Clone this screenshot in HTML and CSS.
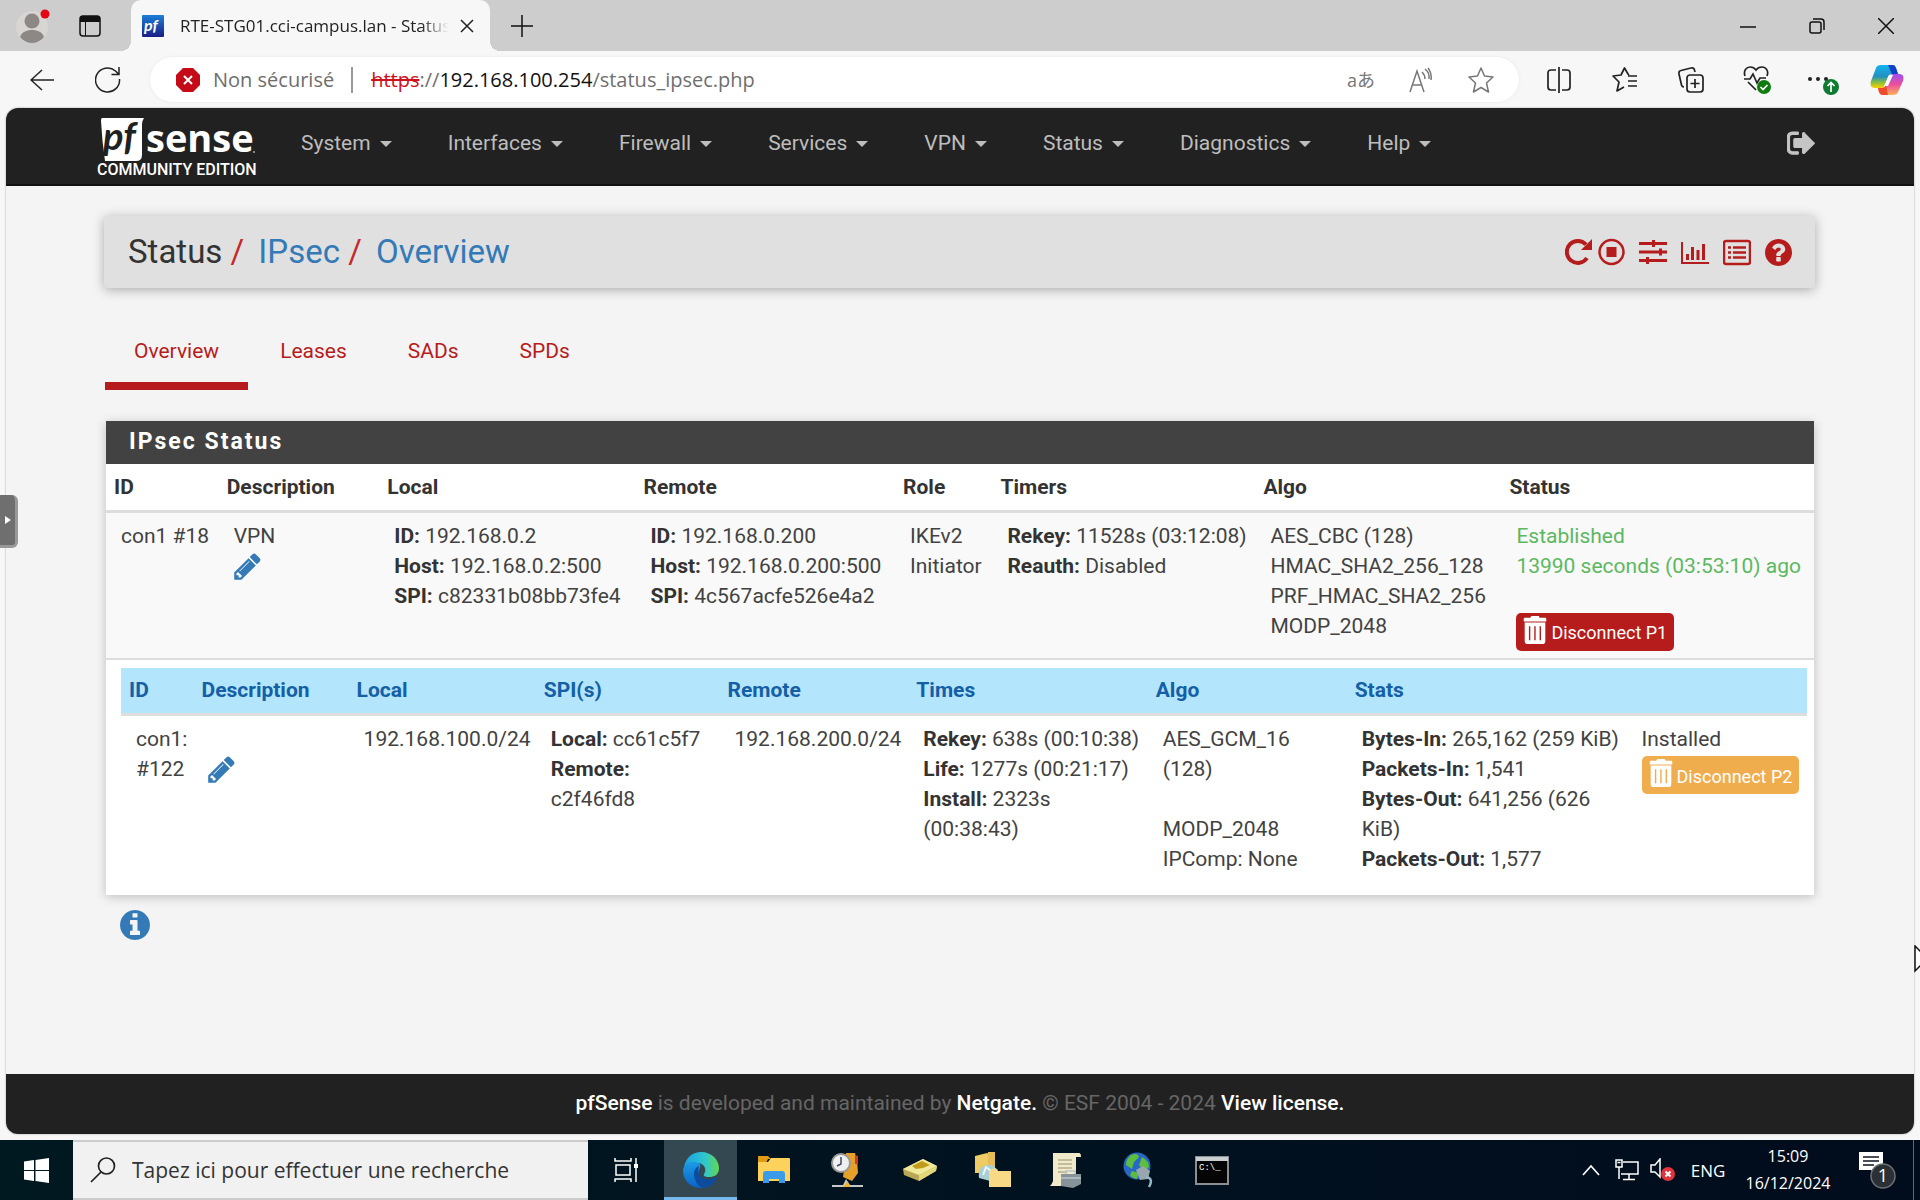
FILE: index.html
```html
<!DOCTYPE html>
<html lang="fr">
<head>
<meta charset="utf-8">
<title>RTE-STG01.cci-campus.lan - Status: IPsec: Overview</title>
<link rel="stylesheet" href="styles.css">
</head>
<body>
<svg class="defs" aria-hidden="true">
  <symbol id="pencil" viewBox="128 0 1536 1792"><path d="M491 1536l91-91-235-235-91 91v107h128v128h107zm523-928q0-22-22-22-10 0-17 7l-542 542q-7 7-7 17 0 22 22 22 10 0 17-7l542-542q7-7 7-17zm-54-192l416 416-832 832h-416v-416zm683 96q0 53-37 90l-166 166-416-416 166-165q36-38 90-38 53 0 91 38l235 234q37 39 37 91z"/></symbol>
  <symbol id="trash" viewBox="0 0 24 32"><path fill-rule="evenodd" d="M8 1h8l1 2h6q1 0 1 1v3H0V4q0-1 1-1h6zM1 8h22v20q0 3-3 3H4q-3 0-3-3zM5.500 12v15h1.500V12zm5.700 0v15h1.500V12zm5.700 0v15h1.500V12z"/></symbol>
</svg>

<header class="browser">
  <div class="titlebar">
    <button class="profile" aria-label="Profil"><svg width="36" height="36" viewBox="0 0 36 36"><circle cx="17" cy="19" r="16" fill="#d8d6d3"/><circle cx="17" cy="13" r="7.500" fill="#8d8885"/><path d="M5 29c2-5 6-7 12-7s10 2 12 7c-7 8-17 8-24 0z" fill="#8d8885"/><circle cx="30" cy="6" r="4.500" fill="#e30613"/></svg></button>
    <button class="workspaces" aria-label="Onglets"><svg width="22" height="22" viewBox="0 0 22 22"><rect x="1" y="1" width="20" height="20" rx="3" fill="none" stroke="#111" stroke-width="1.500"/><path d="M1 7V4q0-3 3-3h14q3 0 3 3v3zM6 7v14h1V7z" fill="#111"/></svg></button>
    <div class="tab">
      <svg width="22" height="22" viewBox="0 0 22 22" class="favicon"><defs><linearGradient id="fav" x2="0" y2="1"><stop stop-color="#1d7fd6"/><stop offset="1" stop-color="#1b1c86"/></linearGradient></defs><rect width="22" height="22" rx="1" fill="url(#fav)"/><text x="2" y="16" class="pf-mini">pf</text></svg>
      <span class="tab-title">RTE-STG01.cci-campus.lan - Status</span>
      <button class="tab-close" aria-label="Fermer l'onglet"><svg width="14" height="14" viewBox="0 0 14 14"><path d="M1 1l12 12M13 1L1 13" stroke="#222" stroke-width="1.500"/></svg></button>
    </div>
    <button class="new-tab" aria-label="Nouvel onglet"><svg width="22" height="22" viewBox="0 0 22 22"><path d="M11 0v22M0 11h22" stroke="#111" stroke-width="1.500"/></svg></button>
    <div class="window-controls">
      <button aria-label="Réduire"><svg width="16" height="16" viewBox="0 0 16 16"><path d="M0 9h16" stroke="#111" stroke-width="1.500"/></svg></button>
      <button aria-label="Restaurer"><svg width="16" height="16" viewBox="0 0 16 16" fill="none" stroke="#111" stroke-width="1.500"><rect x="1" y="4" width="11" height="11" rx="2"/><path d="M4 1h8q3 0 3 3v8"/></svg></button>
      <button aria-label="Fermer"><svg width="16" height="16" viewBox="0 0 16 16"><path d="M0 0l16 16M16 0L0 16" stroke="#111" stroke-width="1.500"/></svg></button>
    </div>
  </div>
  <div class="toolbar">
    <button class="tool" aria-label="Retour"><svg width="24" height="22" viewBox="0 0 24 22" fill="none" stroke="#222" stroke-width="1.500"><path d="M24 11H1M12 1L1 11l11 10"/></svg></button>
    <button class="tool" aria-label="Actualiser"><svg width="26" height="26" viewBox="0 0 26 26" fill="none" stroke="#222" stroke-width="1.500"><path d="M24.500 12a12 12 0 1 1-4-8l3 3M24 0v7.500h-7.500"/></svg></button>
    <div class="address">
      <svg width="24" height="24" viewBox="0 0 24 24"><path d="M7 0h10l7 7v10l-7 7H7l-7-7V7z" fill="#c50b17"/><path d="M8 8l8 8M16 8l-8 8" stroke="#fff" stroke-width="2"/></svg>
      <span class="insecure">Non sécurisé</span>
      <div class="url" role="textbox" contenteditable="true" spellcheck="false" aria-label="Adresse"><s>https</s>://<b>192.168.100.254</b>/status_ipsec.php</div>
      <button class="tool small translate" aria-label="Traduire">aあ</button>
      <button class="tool small" aria-label="Lecture à voix haute"><svg width="26" height="26" viewBox="0 0 26 26" fill="none" stroke="#777" stroke-width="1.500"><path d="M2 25L9 4l7 21M4 18h10M14 5q3 3 3 7M17 2q5 4 4 10M20 1q4 5 3 12"/></svg></button>
      <button class="tool small" aria-label="Favori"><svg width="26" height="26" viewBox="0 0 26 26" fill="none" stroke="#777" stroke-width="1.500" stroke-linejoin="round"><path d="M13 1l3.500 8 8.500 1-6.500 6 2 9L13 20.500 5.500 25l2-9L1 10l8.500-1z"/></svg></button>
    </div>
    <button class="tool" aria-label="Écran partagé"><svg width="24" height="26" viewBox="0 0 24 26" fill="none" stroke="#222" stroke-width="1.700"><path d="M9 3H4Q1 3 1 6v14q0 3 3 3h5M15 3h5q3 0 3 3v14q0 3-3 3h-5M12 0v26"/></svg></button>
    <button class="tool" aria-label="Favoris"><svg width="26" height="26" viewBox="0 0 26 26" fill="none" stroke="#222" stroke-width="1.700" stroke-linejoin="round"><path d="M17 8l-1-1-3.500-6L9 8l-8 1 6 6-2 9 7-4M16 9h9M16 14h9M16 19h9"/></svg></button>
    <button class="tool" aria-label="Collections"><svg width="26" height="26" viewBox="0 0 26 26" fill="none" stroke="#222" stroke-width="1.700"><rect x="9" y="8" width="16" height="17" rx="3"/><path d="M17 12v9M12.500 16.500h9M6 20q-2 0-2.500-2L1 7q-.500-3 2-3.500L13 1q3-.500 3.500 2l.500 2"/></svg></button>
    <button class="tool" aria-label="Performances"><svg width="28" height="28" viewBox="0 0 28 28" fill="none" stroke="#222" stroke-width="1.700"><path d="M2 10C0 4 4 1 7 1q4 0 6 3 2-3 6-3c4 0 7 4 5 9M1 13h6l3-5 4 9 3-5h6M5 16l8 8"/><circle cx="21" cy="21" r="7" fill="#107c10" stroke="none"/><path d="M17.500 21l2.500 2.500 4.500-4.500" stroke="#fff"/></svg></button>
    <button class="tool" aria-label="Paramètres"><svg width="34" height="30" viewBox="0 0 34 30"><circle cx="4" cy="14" r="2" fill="#222"/><circle cx="12" cy="14" r="2" fill="#222"/><circle cx="20" cy="14" r="2" fill="#222"/><circle cx="25" cy="22" r="8" fill="#0f7b32"/><path d="M25 27V18M21.500 21l3.500-3.500 3.500 3.500" fill="none" stroke="#fff" stroke-width="1.700"/></svg></button>
    <button class="tool copilot" aria-label="Copilot"><svg width="34" height="32" viewBox="0 0 34 32"><defs><linearGradient id="c1" x2="0" y2="1"><stop stop-color="#12b4f0"/><stop offset=".5" stop-color="#2390c0"/><stop offset=".75" stop-color="#87be3f"/><stop offset="1" stop-color="#ffd000"/></linearGradient><linearGradient id="c2" x2="0" y2="1"><stop stop-color="#9b4ff0"/><stop offset=".5" stop-color="#ec4f9c"/><stop offset="1" stop-color="#ffb15a"/></linearGradient></defs><path d="M11 1h12q2 0 3 3l2 6h-6q-3 0-4 3l-3 8q-1 3-4 3H5q-6 0-4-7L6 4q1-3 5-3z" fill="url(#c1)"/><path d="M18 1h5q2 0 3 3l2 6h-6z" fill="#1440c8"/><path d="M23 31H12q-2 0-3-3l-1-4h4q3 0 4-3l3-8q1-3 4-3h6q6 0 4 7l-5 11q-1 3-5 3z" fill="url(#c2)"/><path d="M8 24h4q3 0 4-3l2 10h-6q-2 0-3-3z" fill="#ee4b2b"/><path d="M19 11h4l-5 11h-4z" fill="#fff"/></svg></button>
  </div>
</header>

<div class="viewport">
  <nav class="navbar">
    <a class="brand" href="#" aria-label="pfSense Community Edition"><svg width="164" height="64" viewBox="0 0 164 64"><path d="M5 2h42q-2 3-2 6v31q0 6-6 6H8q-3-20-4-40q0-3 1-3z" fill="#fff"/><text x="6" y="34" class="brand-pf">pf</text><text x="49" y="36" class="brand-sense">sense</text><circle cx="157" cy="36" r="1" fill="#aaa"/><text x="0" y="59" class="brand-edition">COMMUNITY EDITION</text></svg></a>
    <ul class="menu">
      <li><a href="#">System</a></li>
      <li><a href="#">Interfaces</a></li>
      <li><a href="#">Firewall</a></li>
      <li><a href="#">Services</a></li>
      <li><a href="#">VPN</a></li>
      <li><a href="#">Status</a></li>
      <li><a href="#">Diagnostics</a></li>
      <li><a href="#">Help</a></li>
    </ul>
    <a class="logout" href="#" aria-label="Logout"><svg width="28" height="24" viewBox="64 192 1600 1400"><path stroke-width="70" d="M704 1440q0 4 1 20t.5 26.500-3 23.500-10 19.500-20.500 6.500h-320q-119 0-203.500-84.500t-84.500-203.500v-704q0-119 84.500-203.500t203.500-84.500h320q13 0 22.500 9.500t9.500 22.500q0 4 1 20t.5 26.500-3 23.500-10 19.500-20.500 6.500h-320q-66 0-113 47t-47 113v704q0 66 47 113t113 47h312l11.500 1 11.500 3 8 5.500 7 9 2 13.500zm928-544q0 26-19 45l-544 544q-19 19-45 19t-45-19-19-45v-288h-448q-26 0-45-19t-19-45v-384q0-26 19-45t45-19h448v-288q0-26 19-45t45-19 45 19 19 45l544 544q19 19 19 45z"/></svg></a>
  </nav>

  <main class="content">
    <div class="page-header">
      <h1>Status <i>/</i> <a href="#">IPsec</a> <i>/</i> <a href="#">Overview</a></h1>
      <div class="shortcuts">
        <a href="#" aria-label="Restart service" class="tight"><svg width="28" height="28" viewBox="0 0 28 28"><path d="M22 20A11 11 0 1 1 21 6.500" fill="none" stroke="#b71c1c" stroke-width="4"/><path d="M27 1v11H16z" fill="#b71c1c"/></svg></a>
        <a href="#" aria-label="Stop service"><svg width="27" height="28" viewBox="0 0 27 28"><circle cx="13.500" cy="14" r="12" fill="none" stroke="#b71c1c" stroke-width="2.500"/><rect x="8.500" y="9" width="10" height="10" fill="#b71c1c"/></svg></a>
        <a href="#" aria-label="Settings"><svg width="28" height="28" viewBox="0 0 28 28" fill="#b71c1c"><path d="M0 4h28v3H0zM0 12.500h28v3H0zM0 21h28v3H0zM13 2h3v7h-3zM20 10.500h3v7h-3zM7 19h3v7H7z"/></svg></a>
        <a href="#" aria-label="Status"><svg width="28" height="28" viewBox="0 0 28 28" fill="#b71c1c"><path d="M0 4h2v20h26v2H0zM5 16h3v6H5zM10 9h3v13h-3zM15.500 12h3v10h-3zM21 6h3v16h-3z"/></svg></a>
        <a href="#" aria-label="Logs"><svg width="28" height="28" viewBox="0 0 28 28"><rect x="1" y="3" width="26" height="23" rx="2" fill="none" stroke="#b71c1c" stroke-width="2.500"/><path d="M5 9.500h3M10 9.500h13M5 14.500h3M10 14.500h13M5 19.500h3M10 19.500h13" stroke="#b71c1c" stroke-width="2.500"/></svg></a>
        <a href="#" aria-label="Help"><svg width="27" height="27" viewBox="128 128 1536 1536" fill="#b71c1c"><path d="M1024 1376v-192q0-14-9-23t-23-9h-192q-14 0-23 9t-9 23v192q0 14 9 23t23 9h192q14 0 23-9t9-23zm256-672q0-88-55.500-163t-138.500-116-170-41q-243 0-371 213-15 24 8 42l132 100q7 6 19 6 16 0 25-12 53-68 86-92 34-24 86-24 48 0 85.500 26t37.500 59q0 38-20 61t-68 45q-63 28-115.500 86.500t-52.500 125.500v36q0 14 9 23t23 9h192q14 0 23-9t9-23q0-19 21.500-49.500t54.500-49.500q32-18 49-28.500t46-35 44.500-48 28-60.500 12.500-81zm384 192q0 209-103 385.500t-279.500 279.500-385.500 103-385.500-103-279.500-279.500-103-385.500 103-385.500 279.500-279.500 385.500-103 385.500 103 279.500 279.500 103 385.500z"/></svg></a>
      </div>
    </div>

    <ul class="tabs">
      <li class="active"><a href="#">Overview</a></li>
      <li><a href="#">Leases</a></li>
      <li><a href="#">SADs</a></li>
      <li><a href="#">SPDs</a></li>
    </ul>

    <section class="panel">
      <h2>IPsec Status</h2>
      <table class="phase1">
        <colgroup><col class="w-id"><col class="w-desc"><col class="w-local"><col class="w-remote"><col class="w-role"><col class="w-timers"><col class="w-algo"><col></colgroup>
        <thead><tr><th>ID</th><th>Description</th><th>Local</th><th>Remote</th><th>Role</th><th>Timers</th><th>Algo</th><th>Status</th></tr></thead>
        <tbody>
          <tr class="connection">
            <td>con1 #18</td>
            <td>VPN<br><a href="#" aria-label="Edit"><svg class="pencil" width="27" height="31"><use href="#pencil"/></svg></a></td>
            <td><b>ID:</b> 192.168.0.2<br><b>Host:</b> 192.168.0.2:500<br><b>SPI:</b> c82331b08bb73fe4</td>
            <td><b>ID:</b> 192.168.0.200<br><b>Host:</b> 192.168.0.200:500<br><b>SPI:</b> 4c567acfe526e4a2</td>
            <td>IKEv2<br>Initiator</td>
            <td><b>Rekey:</b> 11528s (03:12:08)<br><b>Reauth:</b> Disabled</td>
            <td>AES_CBC (128)<br>HMAC_SHA2_256_128<br>PRF_HMAC_SHA2_256<br>MODP_2048</td>
            <td class="ok">Established<br>13990 seconds (03:53:10) ago<br><br><button class="btn danger"><svg width="24" height="30"><use href="#trash"/></svg><span>Disconnect P1</span></button></td>
          </tr>
          <tr>
            <td colspan="8" class="children">
              <table class="phase2">
                <colgroup><col class="c-id"><col class="c-desc"><col class="c-local"><col class="c-spi"><col class="c-remote"><col class="c-times"><col class="c-algo"><col class="c-stats"><col></colgroup>
                <thead><tr><th>ID</th><th>Description</th><th>Local</th><th>SPI(s)</th><th>Remote</th><th>Times</th><th>Algo</th><th>Stats</th><th></th></tr></thead>
                <tbody><tr>
                  <td>con1:<br>#122</td>
                  <td><br><a href="#" aria-label="Edit"><svg class="pencil" width="27" height="31"><use href="#pencil"/></svg></a></td>
                  <td>192.168.100.0/24</td>
                  <td><b>Local:</b> cc61c5f7<br><b>Remote:</b><br>c2f46fd8</td>
                  <td>192.168.200.0/24</td>
                  <td><b>Rekey:</b> 638s (00:10:38)<br><b>Life:</b> 1277s (00:21:17)<br><b>Install:</b> 2323s<br>(00:38:43)</td>
                  <td>AES_GCM_16<br>(128)<br><br>MODP_2048<br>IPComp: None</td>
                  <td><b>Bytes-In:</b> 265,162 (259 KiB)<br><b>Packets-In:</b> 1,541<br><b>Bytes-Out:</b> 641,256 (626<br>KiB)<br><b>Packets-Out:</b> 1,577</td>
                  <td>Installed<br><button class="btn warning"><svg width="24" height="30"><use href="#trash"/></svg><span>Disconnect P2</span></button></td>
                </tr></tbody>
              </table>
            </td>
          </tr>
        </tbody>
      </table>
    </section>
    <button class="info" aria-label="Information"><svg width="30" height="30" viewBox="128 128 1536 1536" fill="#337ab7"><path d="M1152 1376v-160q0-14-9-23t-23-9h-96v-512q0-14-9-23t-23-9h-320q-14 0-23 9t-9 23v160q0 14 9 23t23 9h96v320h-96q-14 0-23 9t-9 23v160q0 14 9 23t23 9h448q14 0 23-9t9-23zm-128-896v-160q0-14-9-23t-23-9h-192q-14 0-23 9t-9 23v160q0 14 9 23t23 9h192q14 0 23-9t9-23zm640 416q0 209-103 385.500t-279.500 279.500-385.500 103-385.500-103-279.500-279.500-103-385.500 103-385.500 279.500-279.500 385.500-103 385.500 103 279.500 279.500 103 385.500z"/></svg></button>
  </main>

  <footer class="footer"><p><a href="#">pfSense</a> is developed and maintained by <a href="#">Netgate.</a> © ESF 2004 - 2024 <a href="#">View license.</a></p></footer>
</div>

<div class="taskbar">
  <button class="start" aria-label="Démarrer"><svg width="25" height="25" viewBox="0 0 25 25" fill="#fff"><path d="M0 3.500l10-1.400V12H0zM11.500 1.900L25 0v12H11.500zM0 13h10v9.900L0 21.500zM11.500 13H25v12l-13.500-1.900z"/></svg></button>
  <label class="search"><svg width="26" height="26" viewBox="0 0 26 26" fill="none" stroke="#222" stroke-width="1.700"><circle cx="16.500" cy="9" r="8"/><path d="M11 15L1 25"/></svg><input type="text" placeholder="Tapez ici pour effectuer une recherche" aria-label="Recherche"></label>
  <button class="taskview" aria-label="Vue des tâches"><svg width="25" height="24" viewBox="0 0 25 24" fill="none" stroke="#fff" stroke-width="1.500"><rect x="2" y="7" width="14" height="10"/><path d="M1 0v3h16V0M1 24v-3h16v3M22 0v24"/><path d="M20 6h4v4h-4z" fill="#fff" stroke="none"/></svg></button>
  <button class="app active" aria-label="Microsoft Edge"><svg width="36" height="36" viewBox="0 0 36 36"><defs><linearGradient id="e1" x2="1"><stop stop-color="#1ba0e0"/><stop offset=".6" stop-color="#2fc6cf"/><stop offset="1" stop-color="#62d84e"/></linearGradient><linearGradient id="e2" x2="0" y2="1"><stop stop-color="#1c9be8"/><stop offset="1" stop-color="#0b62c4"/></linearGradient></defs><path d="M1 15C3 5 10 0 18 0c11 0 18 8 18 16 0 7-5 9-10 9-4 0-6-1-5-3 3-4 1-11-7-11C8 11 3 13 1 15z" fill="url(#e1)"/><path d="M0 18c1-6 7-9 13-8 4 1 5 3 4 6-3 6-1 14 7 15 3 0 6 0 9-3-4 6-10 8-15 8C8 36 0 29 0 18z" fill="url(#e2)"/><path d="M11 22c0-4 2-7 5-8-2 5 0 12 7 13 4 1 8-1 10-2 1 0 1 1 0 3-4 6-9 8-13 8-5-1-9-8-9-14z" fill="#0d4c9c"/></svg></button>
  <button class="app" aria-label="Explorateur de fichiers"><svg width="34" height="30" viewBox="0 0 34 30"><path d="M1 1h10l3 3h-3l-2 4H1z" fill="#e29a12"/><path d="M1 7h10l3-4h18q1 0 1 1v22H1z" fill="#ffd35b"/><path d="M6 28V19q0-3 3-3h16q3 0 3 3v9h-6v-4H12v4z" fill="#3c9be8"/></svg></button>
  <button class="app" aria-label="Planificateur"><svg width="34" height="36" viewBox="0 0 34 36"><path d="M16 1h9q3 10 3 20l-6 8-9-4z" fill="#e5a02c"/><path d="M25 3l3 1v8h-3z" fill="#d4362a"/><circle cx="11" cy="11" r="9" fill="#eef0f0" stroke="#999" stroke-width="2"/><path d="M11 5v7l-4 2" fill="none" stroke="#446" stroke-width="1.500"/><path d="M2 33h11l3-6 4 6h13v2H2z" fill="#c3c9c9"/><path d="M14 35q3-9 6 0z" fill="#f3b21a"/></svg></button>
  <button class="app" aria-label="Stockage"><svg width="34" height="24" viewBox="0 0 34 24"><path d="M0 11L20 1l14 7-1 5-17 10L1 17z" fill="#b9a956"/><path d="M0 11L20 1l14 7-18 9z" fill="#f1ea9b"/><path d="M9 8l10-5 8 4-7 3-7 1z" fill="#c39b1c"/><path d="M16 17l18-9-1 5-17 10z" fill="#e3d77c"/></svg></button>
  <button class="app" aria-label="Serveur de fichiers"><svg width="38" height="36" viewBox="0 0 38 36"><path d="M1 4l12-3 8 5v15H1z" fill="#efcb66"/><path d="M14 0h7v14h-7z" fill="#e5bd58"/><path d="M5 26q-2-14 13-13l6 5-4 12z" fill="#a9cfd4"/><path d="M9 23l3-8 9 7" fill="none" stroke="#eaf7f8" stroke-width="2"/><path d="M15 19l5-3 4 3h13v16H15z" fill="#f8da86"/></svg></button>
  <button class="app" aria-label="Stratégies"><svg width="34" height="36" viewBox="0 0 34 36"><path d="M4 1h26q2 0 2 4h-5v24q0 5-4 5H1q2-2 3-5z" fill="#f0eacb"/><path d="M9 8h14M9 12h14M9 16h14M9 20h9" stroke="#b4ae90" stroke-width="1.500"/><path d="M12 22h20v10l-8 4-12-2z" fill="#87939a"/><path d="M17 22v-3h9v3M12 26h20" fill="none" stroke="#bac4c8" stroke-width="1.500"/></svg></button>
  <button class="app" aria-label="Réseau"><svg width="34" height="36" viewBox="0 0 34 36"><circle cx="15" cy="14" r="13.500" fill="#2767c8"/><path d="M9 3q7-3 8 2l-5 5-2 7-6-4q0-6 5-10zM20 5q7 4 7 10l-5 5-5-7zM10 19l7 2-2 6q-5-1-7-4z" fill="#5dbd3c"/><path d="M14 18l7-4 7 5-2 8-8 1z" fill="#98a6ad"/><path d="M24 25q8 1 3 10" fill="none" stroke="#93b4c2" stroke-width="2.500"/></svg></button>
  <button class="app" aria-label="Invite de commandes"><svg width="34" height="29" viewBox="0 0 34 29"><rect x="1" y="1" width="32" height="27" fill="#050505" stroke="#8b8f92" stroke-width="2"/><path d="M1 1h32v4H1z" fill="#c9ced0"/><text x="4" y="14" class="cmd">C:\_</text></svg></button>
  <div class="tray">
    <button class="tray-icon" aria-label="Icônes masquées"><svg width="18" height="12" viewBox="0 0 18 12"><path d="M1 11l8-9 8 9" fill="none" stroke="#fff" stroke-width="1.700"/></svg></button>
    <button class="tray-icon" aria-label="Réseau"><svg width="24" height="22" viewBox="0 0 24 22" fill="none" stroke="#fff" stroke-width="1.500"><path d="M8 3h15v12H6M14 15v6M8 20.500h12M1 1h6v7H1zM4 8v12M2.500 3.500h3"/></svg></button>
    <button class="tray-icon" aria-label="Volume"><svg width="26" height="24" viewBox="0 0 26 24"><path d="M1 7h4l5-6v18l-5-5H1z" fill="none" stroke="#fff" stroke-width="1.500"/><circle cx="18" cy="16" r="7" fill="#e0333c"/><path d="M15.500 13.500l5 5M20.500 13.500l-5 5" stroke="#fff" stroke-width="2"/></svg></button>
    <button class="lang">ENG</button>
    <button class="clock"><span>15:09</span><span>16/12/2024</span></button>
    <button class="notif" aria-label="Notifications"><svg width="38" height="38" viewBox="0 0 38 38"><path d="M1 1h24v18H19v6l-6-6H1z" fill="#fff"/><path d="M5 6h16M5 10h16M5 14h11" stroke="#0a1620" stroke-width="1.700"/><circle cx="25" cy="25" r="12" fill="#2b3036" stroke="#6c7074" stroke-width="1.500"/><text x="25" y="31" text-anchor="middle" class="count">1</text></svg></button>
  </div>
</div>

<button class="side-handle" aria-label="Ouvrir le panneau"><svg width="6" height="8" viewBox="0 0 6 8"><path d="M0 0l6 4-6 4z" fill="#fff"/></svg></button>
<svg class="pointer" width="6" height="28" viewBox="0 0 6 28" aria-hidden="true"><path d="M1 1v25l7-7V8z" fill="#fff" stroke="#111" stroke-width="1.500"/></svg>
</body>
</html>
```
FILE: styles.css
```css
* { box-sizing: border-box; }
body {
  margin: 0;
  min-height: 100vh;
  display: flex;
  flex-direction: column;
  position: relative;
  overflow-x: hidden;
  background: #f7f7f7;
  color: #424242;
  font: 21px/30px Roboto, sans-serif;
}
.defs { position: absolute; width: 0; height: 0; }
button { border: 0; padding: 0; background: none; font: inherit; color: inherit; display: inline-flex; align-items: center; justify-content: center; }
svg { display: block; flex: none; }
a { text-decoration: none; }
ul { list-style: none; margin: 0; padding: 0; display: flex; }

/* browser chrome */
.browser, .taskbar { font-family: "Open Sans", "Noto Sans CJK JP", sans-serif; }
.titlebar { display: flex; height: 51px; background: #cdcdcd; }
.profile { width: 66px; }
.workspaces { width: 48px; }
.tab { display: flex; align-items: center; width: 359px; margin-left: 17px; padding: 0 12px 0 11px; background: #f7f7f7; border-radius: 10px 10px 0 0; position: relative; }
.tab::before, .tab::after { content: ""; position: absolute; bottom: 0; width: 10px; height: 10px; }
.tab::before { left: -10px; background: radial-gradient(circle at 0 0, #cdcdcd 10px, #f7f7f7 10px); }
.tab::after { right: -10px; background: radial-gradient(circle at 100% 0, #cdcdcd 10px, #f7f7f7 10px); }
.tab-title { flex: 1; min-width: 0; margin-left: 16px; overflow: hidden; white-space: nowrap; font-size: 17px; color: #222; mask-image: linear-gradient(90deg, #000 88%, transparent 98%); }
.tab-close { width: 22px; margin-left: 2px; }
.pf-mini { font: italic bold 16px Lato, sans-serif; fill: #fff; }
.new-tab { width: 64px; }
.window-controls { display: flex; margin-left: auto; }
.window-controls button { width: 69px; }
.toolbar { display: flex; align-items: center; height: 57px; padding: 0 2px 0 9px; }
.tool { width: 66px; height: 44px; }
.tool.small { width: 60px; }
.tool.copilot { width: 62px; }
.address { flex: 1; display: flex; align-items: center; height: 45px; margin: 0 7px 0 9px; padding: 0 8px 0 26px; border-radius: 23px; background: #fff; box-shadow: 0 0 3px #e4e4e4; }
.insecure { margin-left: 13px; padding-right: 17px; border-right: 2px solid #999; color: #6d6d6d; font-size: 20px; line-height: 26px; }
.url { flex: 1; margin-left: 18px; font-size: 20px; color: #6f6f6f; white-space: nowrap; }
.url s { color: #d0121b; }
.url b { font-weight: normal; color: #111; }
.translate { color: #777; font-size: 18px; }

/* page */
.viewport { flex: 1; display: flex; flex-direction: column; margin: 0 6px 6px; border-radius: 12px; overflow: hidden; background: #f4f4f4; box-shadow: 0 0 2px #999; }
.navbar { display: flex; height: 78px; padding: 0 99px 0 91px; background: #212121; border-bottom: 2px solid #111; }
.brand { width: 164px; margin: 8px 12px 0 0; }
.brand-pf { font: italic bold 38px Lato, sans-serif; fill: #212121; }
.brand-sense { font: bold 38px "Open Sans", sans-serif; fill: #fff; }
.brand-edition { font: 500 16px Roboto, sans-serif; fill: #fff; }
.menu a { display: block; padding: 20px 28px; color: #bdbdbd; }
.menu a::after { content: ""; display: inline-block; margin-left: 9px; vertical-align: middle; border: 6px solid transparent; border-top-color: #bdbdbd; border-bottom: 0; }
.logout { margin: 23px 0 0 auto; fill: #c4c4c4; stroke: #c4c4c4; }
.content { flex: 1; padding: 30px 99px 24px 98px; }
.page-header { display: flex; align-items: center; justify-content: space-between; height: 72px; padding: 0 23px 0 24px; background: #e0e0e0; border-radius: 4px; box-shadow: 0 2px 12px rgba(0, 0, 0, .3); }
h1 { margin: 0; font-size: 33px; line-height: 40px; font-weight: 400; color: #333; }
h1 a, .pencil { color: #337ab7; fill: #337ab7; }
h1 i { font-style: normal; color: #c62828; margin-right: 6px; }
.shortcuts { display: flex; align-items: center; gap: 14px; }
.shortcuts .tight { margin-right: -9px; }
.tabs { gap: 3px; margin: 40px 0 31px 1px; }
.tabs a { display: block; padding: 8px 29px 16px; border-bottom: 8px solid transparent; color: #b71c1c; }
.tabs .active a { border-color: #b71c1c; }
.panel { margin: 0 1px 0 2px; background: #fff; box-shadow: 0 2px 10px rgba(0, 0, 0, .22); }
h2 { margin: 0; height: 43px; padding: 6px 23px; background: #424242; color: #fff; font-size: 23px; line-height: 30px; letter-spacing: 2px; font-weight: 700; }
table { width: 100%; border-collapse: collapse; table-layout: fixed; }
th { height: 47px; padding: 0 8px; border-bottom: 3px solid #ddd; text-align: left; font-weight: 700; color: #333; }
th, td { white-space: nowrap; }
td { padding: 8px 0 9px 15px; vertical-align: top; }
b { color: #333; }
.connection { background: #f9f9f9; border-bottom: 2px solid #ddd; }
.ok { padding-bottom: 7px; color: #5cb860; }
.w-id { width: 6.6%; }
.w-desc { width: 9.4%; }
.w-local { width: 15%; }
.w-remote { width: 15.2%; }
.w-role { width: 5.7%; }
.w-timers { width: 15.4%; }
.w-algo { width: 14.4%; }
.children { padding: 8px 7px 12px 15px; }
.phase2 th { color: #145fa6; background: #b3e5fc; }
.c-id { width: 4.3%; }
.c-desc { width: 9.2%; }
.c-local { width: 11.1%; }
.c-spi { width: 10.9%; }
.c-remote { width: 11.2%; }
.c-times { width: 14.2%; }
.c-algo { width: 11.8%; }
.c-stats { width: 16.6%; }
.btn { height: 38px; margin-top: 2px; padding: 0 7px; gap: 4px; border-radius: 5px; color: #fff; fill: #fff; font-size: 18px; vertical-align: top; }
.btn svg { margin-bottom: 4px; }
.btn span { padding-top: 3px; }
.danger { background: #b71c1c; }
.warning { background: #f0ad4e; }
.info { margin: 15px 0 0 16px; }
.footer { height: 60px; padding: 14px; background: #212121; color: #666; text-align: center; }
.footer p { margin: 0; }
.footer a { color: #fff; font-weight: 500; }

/* taskbar */
.taskbar { display: flex; height: 60px; background: linear-gradient(90deg, #001820, #01101f 70%, #010c1c); color: #fff; }
.start { width: 73px; }
.search { display: flex; align-items: center; width: 515px; padding: 0 17px; gap: 16px; background: #f1f1f1; border: solid #ccc; border-width: 2px 0; }
.search input { flex: 1; min-width: 0; border: 0; padding: 0; background: none; font: inherit; font-size: 21px; outline: 0; }
.search input::placeholder { color: #333; opacity: 1; }
.taskview { width: 76px; }
.app { width: 73px; }
.app.active { background: #334850; box-shadow: inset 0 -3px #76b9ed; }
.cmd { font: 9px "Liberation Mono", monospace; fill: #fff; }
.tray { display: flex; margin-left: auto; padding-right: 6px; font-size: 17px; line-height: 27px; }
.tray-icon { width: 36px; }
.lang { width: 54px; }
.clock { width: 106px; flex-direction: column; font-size: 16px; }
.notif { width: 73px; border-right: 1px solid #667; }
.count { font: 18px "Open Sans", sans-serif; fill: #fff; }

/* overlays */
.side-handle { position: absolute; left: 0; top: 495px; width: 18px; height: 53px; background: #6f6f6f; border-radius: 0 6px 6px 0; border-right: 3px solid #999; border-bottom: 3px solid #999; }
.pointer { position: absolute; right: 0; top: 945px; }
```
